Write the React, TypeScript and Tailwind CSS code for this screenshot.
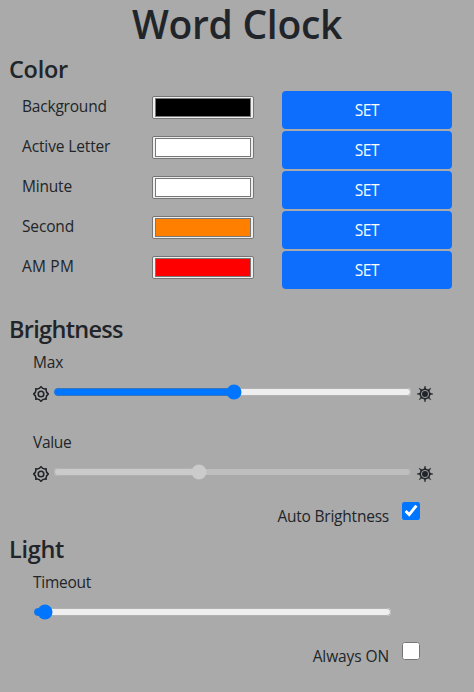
import { useState } from "react";

type Swatch = { label: string; fill: string; tracking: string };

const swatches: Swatch[] = [
  { label: "Background", fill: "bg-black", tracking: "tracking-[-0.2px]" },
  { label: "Active Letter", fill: "bg-white", tracking: "tracking-[-0.13px]" },
  { label: "Minute", fill: "bg-white", tracking: "tracking-[-0.2px]" },
  { label: "Second", fill: "bg-[#ff8000]", tracking: "tracking-[-0.15px]" },
  { label: "AM PM", fill: "bg-[#ff0000]", tracking: "tracking-[0.2px]" },
];

// Eight-pointed outline with concave sides between the tips.
function burst(tip: number, dip: number): string {
  const at = (r: number, step: number) => {
    const a = (step * Math.PI) / 8;
    return `${(8 + r * Math.sin(a)).toFixed(2)} ${(8 - r * Math.cos(a)).toFixed(2)}`;
  };
  let d = `M${at(tip, 0)}`;
  for (let i = 0; i < 8; i++) d += `Q${at(dip, i * 2 + 1)} ${at(tip, i * 2 + 2)}`;
  return d + "Z";
}

function DimIcon() {
  return (
    <svg className="size-4 shrink-0" viewBox="0 0 16 16" fill="none" stroke="#212529">
      <path d={burst(7.4, 4.8)} strokeWidth="1.5" strokeLinejoin="round" />
      <circle cx="8" cy="8" r="2.8" strokeWidth="1.6" />
    </svg>
  );
}

function BrightIcon() {
  return (
    <svg className="size-4 shrink-0" viewBox="0 0 16 16" fill="#212529">
      <path d={burst(8.2, 2.2)} stroke="#212529" strokeWidth="0.5" />
      <circle cx="8" cy="8" r="5.1" />
      <circle cx="8" cy="8" r="3.6" fill="none" stroke="#aaaaaa" strokeWidth="0.9" />
    </svg>
  );
}

function Heading({ children, tracking }: { children: string; tracking: string }) {
  return <h2 className={`h-[29px] pl-[9px] text-[23.5px] leading-[29px] font-semibold ${tracking}`}>{children}</h2>;
}

function Slider({ start, disabled = false, className }: { start: number; disabled?: boolean; className: string }) {
  const [value, setValue] = useState(start);
  return (
    <input
      type="range"
      min={0}
      max={1000}
      value={value}
      disabled={disabled}
      onChange={(e) => setValue(Number(e.target.value))}
      className={`h-4 ${className}`}
    />
  );
}

function Toggle({ label, start, tracking }: { label: string; start: boolean; tracking: string }) {
  const [on, setOn] = useState(start);
  return (
    <label className="-mt-[2px] flex h-10 justify-end pr-[54px]">
      <span className={`mt-[2px] mr-[13px] h-6 leading-6 ${tracking}`}>{label}</span>
      <input
        type="checkbox"
        checked={on}
        onChange={(e) => setOn(e.target.checked)}
        className="size-[18px]"
      />
    </label>
  );
}

export default function App() {
  return (
    <main className="h-[692px] w-full bg-[#aaaaaa] font-['Open_Sans','Noto_Sans',sans-serif] text-[15.5px] text-[#212529]">
      <h1 className="h-[55px] text-center text-[39px] leading-[48px] font-semibold tracking-[-0.3px]">Word Clock</h1>

      <section className="h-[260px]">
        <Heading tracking="tracking-[-0.3px]">Color</Heading>
        <div className="mt-[7px] flex flex-col gap-[2px]">
          {swatches.map((s) => (
            <div key={s.label} className="flex h-[38px] items-start pt-px pl-[22px]">
              <span className={`mt-[2px] w-[130px] leading-6 ${s.tracking}`}>{s.label}</span>
              <button
                aria-label={s.label}
                className="mt-1 flex h-[23px] w-[102px] rounded-[2px] border border-[#767676] bg-[#efefef] px-[2px] py-px"
              >
                <span className={`h-[19px] w-full border border-[#777777] ${s.fill}`} />
              </button>
              <button className="-mt-px ml-7 h-[38px] w-[170px] rounded-[4px] bg-[#0d6efd] leading-[38px] tracking-[-0.4px] text-white">
                SET
              </button>
            </div>
          ))}
        </div>
      </section>

      <section className="h-[220px]">
        <Heading tracking="tracking-[-0.7px]">Brightness</Heading>
        <div className="h-20 pt-[6px]">
          <div className="pl-[33px] leading-6 tracking-[-0.2px]">Max</div>
          <div className="mt-[10px] flex pl-[33px]">
            <div className="pt-[2px]"><DimIcon /></div>
            <Slider start={505} className="mx-1 w-[359px]" />
            <div className="pt-[2px] pl-px"><BrightIcon /></div>
          </div>
        </div>
        <div className="h-20 pt-[6px]">
          <div className="pl-[33px] leading-6 tracking-[-0.3px]">Value</div>
          <div className="mt-[10px] flex pl-[33px]">
            <div className="pt-[2px]"><DimIcon /></div>
            <Slider start={402} disabled className="mx-1 w-[359px]" />
            <div className="pt-[2px] pl-px"><BrightIcon /></div>
          </div>
        </div>
        <Toggle label="Auto Brightness" start tracking="tracking-[-0.22px]" />
      </section>

      <section>
        <Heading tracking="tracking-[-0.3px]">Light</Heading>
        <div className="h-20 pt-[6px]">
          <div className="pl-[33px] leading-6 tracking-[-0.25px]">Timeout</div>
          <Slider start={13} className="mt-[10px] ml-[33px] block w-[359px]" />
        </div>
        <Toggle label="Always ON" start={false} tracking="tracking-[-0.1px]" />
      </section>
    </main>
  );
}
